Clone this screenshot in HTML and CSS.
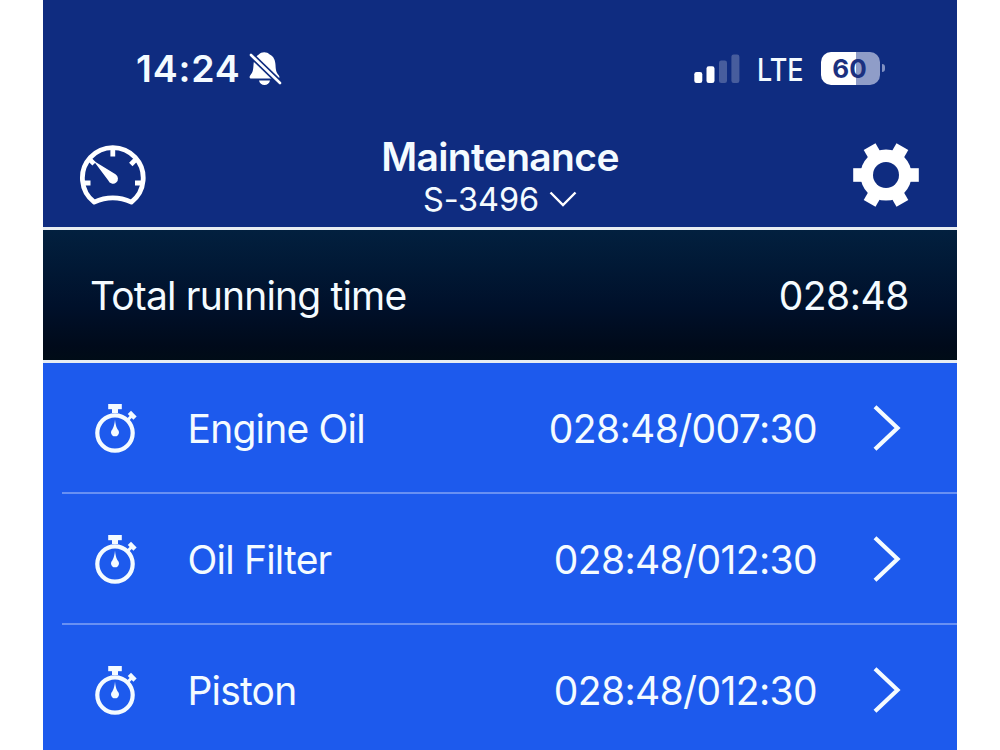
FILE: index.html
```html
<!DOCTYPE html>
<html lang="en">
<head>
<meta charset="utf-8">
<title>Maintenance</title>
<link rel="stylesheet" href="styles.css">
</head>
<body>
<svg class="defs" width="0" height="0" aria-hidden="true">
  <symbol id="stopwatch" viewBox="0 0 44 50">
    <g fill="currentColor">
      <rect x="14.2" y="1" width="13.6" height="5.2"/>
      <rect x="18" y="5" width="6" height="5"/>
      <path d="M21 16.5c.5 5 1.200 7.200 2.700 9.900a4 4 0 1 1-5.400 0c1.500-2.700 2.200-4.900 2.700-9.900z"/>
      <rect x="-4" y="-2.300" width="8" height="4.600" transform="translate(38.200 12.300) rotate(45)"/>
      <rect x="-1.500" y="-2" width="3" height="5" transform="translate(36 14.600) rotate(45)"/>
    </g>
    <circle cx="21" cy="30" r="17.700" fill="none" stroke="currentColor" stroke-width="4.200"/>
  </symbol>
  <symbol id="chevron" viewBox="0 0 28 46">
    <path d="M2 1.800L24.500 23L2 44.200" fill="none" stroke="currentColor" stroke-width="4.200"/>
  </symbol>
</svg>
<main class="phone">
  <header class="header">
    <div class="status">
      <span class="clock">14:24</span>
      <svg class="bell" viewBox="249 51 33 35">
        <path fill="#fff" d="M264.200 52.200c2.300 0 4 .8 5.500 2.200 4 1.600 5.600 6 5.800 10.500.3 5.500.8 7.500 3.200 10.300 1.300 1.700.8 3.400-1.200 3.400h-26c-2 0-2.500-1.700-1.200-3.400 2.400-2.800 2.900-4.800 3.200-10.300.2-4.500 1.800-8.900 5.300-10.500 1.500-1.400 3.100-2.200 5.400-2.200zM259 80.400h11c-.7 2.800-2.700 4.500-5.500 4.500s-4.800-1.700-5.500-4.500z"/>
        <path d="M249 53L282 85" stroke="#0f2c80" stroke-width="6"/>
        <path d="M251 55L280 83" stroke="#fff" stroke-width="2.600" stroke-linecap="round"/>
      </svg>
      <svg class="signal" viewBox="694 53 46 29" fill="#fff">
        <rect x="694.300" y="71" width="8" height="11" rx="2.300"/>
        <rect x="706.500" y="65.300" width="8" height="16.700" rx="2.300"/>
        <g opacity=".23"><rect x="719" y="59.500" width="8" height="22.500" rx="2.300"/>
        <rect x="731.400" y="53.500" width="8" height="28.500" rx="2.300"/></g>
      </svg>
      <span class="network">LTE</span>
      <div class="battery"><span class="level">60</span></div>
      <span class="nub"></span>
    </div>
    <div class="nav">
      <svg class="gauge" viewBox="79 145 68 62" fill="none" stroke="#fff">
        <path stroke-width="4.800" stroke-linejoin="round" d="M94.200 202.100A30.400 30.400 0 1 1 131.400 202.100Q112.800 193.600 94.200 202.100Z"/>
        <path stroke-width="4.800" d="M112.800 150v6.500M84 183h6.500M135 183h6.500M89.500 159.300l4.600 4.600M136 159.300l-5.200 5.200"/>
        <path fill="#fff" stroke="none" d="M93.500 160.800L115.500 174.300A5 5 0 1 1 108.300 180.400Z"/>
      </svg>
      <div class="titles">
        <h1 class="title">Maintenance</h1>
        <div class="model"><span class="model-name">S-3496</span>
          <svg class="down" viewBox="0 0 28 17"><path d="M1.500 1.500L14 14L26.500 1.500" fill="none" stroke="#fff" stroke-width="2.400"/></svg>
        </div>
      </div>
      <svg class="gear" viewBox="-33 -33 66 66">
        <g fill="#fff">
          <rect x="-32.800" y="-6.800" width="65.600" height="13.600"/>
          <rect x="-32.800" y="-6.800" width="65.600" height="13.600" transform="rotate(60)"/>
          <rect x="-32.800" y="-6.800" width="65.600" height="13.600" transform="rotate(120)"/>
          <circle r="25.600"/>
        </g>
        <circle r="13" fill="#0f2c80"/>
      </svg>
    </div>
  </header>
  <section class="total">
    <span class="total-label">Total running time</span>
    <span class="total-value">028:48</span>
  </section>
  <ul class="list">
    <li class="row"><svg class="watch"><use href="#stopwatch"/></svg><span class="name">Engine Oil</span><span class="time">028:48/007:30</span><svg class="arrow"><use href="#chevron"/></svg></li>
    <li class="row"><svg class="watch"><use href="#stopwatch"/></svg><span class="name">Oil Filter</span><span class="time">028:48/012:30</span><svg class="arrow"><use href="#chevron"/></svg></li>
    <li class="row"><svg class="watch"><use href="#stopwatch"/></svg><span class="name">Piston</span><span class="time">028:48/012:30</span><svg class="arrow"><use href="#chevron"/></svg></li>
  </ul>
</main>
</body>
</html>
```
FILE: styles.css
```css
* { box-sizing: border-box; }
body { margin: 0; background: #fff; font-family: Inter, "Liberation Sans", sans-serif; color: #fff; height: 750px; overflow: hidden; }
.defs { display: block; height: 0; }
.phone { width: 914px; height: 750px; margin-left: 43px; overflow: hidden; background: #1d5aed; color: #f4fbff; }
svg { flex: none; display: block; }
span { white-space: nowrap; }
.header { height: 227px; background: #0f2c80; }
.status { display: flex; align-items: center; height: 136px; padding-left: 93px; }
.clock { width: 113px; font-size: 37.5px; font-weight: 600; letter-spacing: .8px; }
.bell { width: 33px; height: 35px; }
.signal { width: 46px; height: 29px; margin-left: 412px; }
.network { width: 64px; margin-left: 17px; font-size: 31px; font-weight: 500; transform: scaleX(.87); transform-origin: left; margin-top: 2px; }
.battery { width: 59px; height: 33px; border-radius: 10px; background: linear-gradient(90deg, #fff 35px, #8f9dc8 35px); display: flex; justify-content: center; align-items: center; }
.level { color: #1b3180; font-size: 26px; font-weight: 700; padding-right: 2px; }
.nub { width: 3px; height: 8px; margin-left: 2px; border-radius: 0 3px 3px 0; background: #8191c2; }
.nav { display: flex; justify-content: space-between; padding: 0 38px 0 36px; height: 91px; }
.gauge { width: 68px; height: 62px; margin-top: 9px; }
.titles { display: flex; flex-direction: column; align-items: center; }
.title { margin: 0; font-size: 39px; font-weight: 600; line-height: 42px; letter-spacing: -.65px; }
.model { display: flex; align-items: center; gap: 10px; height: 42px; }
.model-name { font-size: 32.5px; font-weight: 370; letter-spacing: -.1px; }
.down { width: 28px; height: 17px; }
.gear { width: 66px; height: 66px; margin-top: 6px; }
.total { display: flex; justify-content: space-between; align-items: center; height: 136px; border: solid #e8edf2; border-width: 3px 0; background: linear-gradient(#02203f, #00102a 60%, #000a1a 90%, #000c17); padding: 0 48px; font-size: 39px; font-weight: 380; }
.total-label { letter-spacing: -.82px; margin-left: -1px; }
.total-value { letter-spacing: -.45px; }
.list { margin: 0; padding: 0; list-style: none; }
.row { display: flex; align-items: center; height: 131px; margin-left: 19px; padding: 0 56px 0 32px; border-bottom: 2px solid #6890f3; font-size: 39px; font-weight: 380; }
.watch { width: 44px; height: 50px; }
.name { margin: 2px 0 0 49.5px; letter-spacing: -.8px; }
.time { margin: 2px 0 0 auto; letter-spacing: -.62px; }
.arrow { width: 28px; height: 46px; margin-left: 56px; }
```
